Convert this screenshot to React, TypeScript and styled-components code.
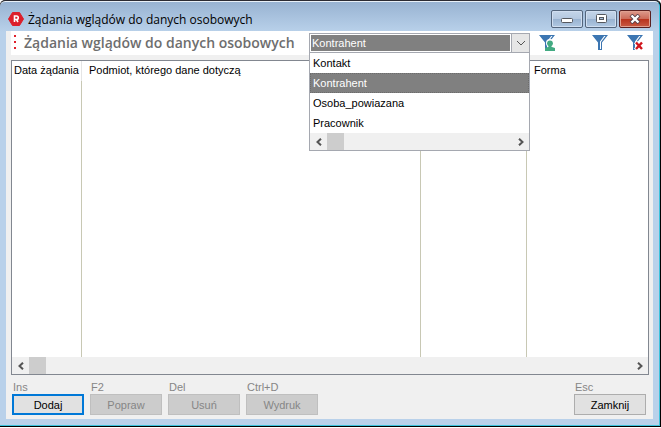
import React, { useState } from "react";
import styled, { createGlobalStyle, css } from "styled-components";

const Global = createGlobalStyle`
  * { box-sizing: border-box; }
  html, body, #root { height: 100%; }
  body { margin: 0; background: #fff; font: 11px/16px "Liberation Sans", Arial, sans-serif; color: #000; }
`;

const Frame = styled.div`
  height: calc(100% - 1px);
  display: flex;
  flex-direction: column;
  border-top: 1px solid #2b2b33;
  border-right: 1px solid #000;
  border-bottom: 1px solid #000;
  border-radius: 5px 5px 0 0;
  background: #000;
  overflow: hidden;
`;

const Glass = styled.div`
  flex: 1;
  min-height: 0;
  display: flex;
  flex-direction: column;
  padding: 0 6px 6px;
  border-radius: 5px 5px 0 0;
  background: linear-gradient(#98b3d2 0, #b9d1ea 30px, #b9d1ea 100%);
  border-top: 1px solid #e8f0f8;
  border-right: 1px solid #3cc3dc;
  border-bottom: 1px solid #3cc3dc;
`;

const TitleBar = styled.header`
  display: flex;
  align-items: center;
  height: 29px;
  padding: 0 2px;
  gap: 4px;
  flex: none;
`;

const WindowTitle = styled.h1`
  flex: 1;
  margin: 0;
  padding-top: 6px;
  font: 12px/18px "Open Sans", "Noto Sans", sans-serif;
  white-space: nowrap;
`;

const Logo = styled.svg`
  width: 16px;
  height: 16px;
  margin-top: 5px;
  flex: none;
`;

const WindowButtons = styled.div`
  display: flex;
  gap: 2px;
  padding-top: 4px;
`;

const WindowButton = styled.button<{ $danger?: boolean }>`
  width: 32px;
  height: 18px;
  padding: 0;
  display: grid;
  place-items: center;
  border: 1px solid ${(p) => (p.$danger ? "#5a2020" : "#53657c")};
  border-radius: 2px;
  box-shadow: inset 0 0 0 1px ${(p) => (p.$danger ? "#e0a090" : "#d0def0")};
  background: ${(p) =>
    p.$danger
      ? "linear-gradient(#dc9a8c 0, #cc6a58 50%, #b8321c 50%, #c85a44 100%)"
      : "linear-gradient(#c4d5e9 0, #b4c8e0 50%, #98b2d0 50%, #b0c8e2 100%)"};
`;

const Client = styled.main`
  flex: 1;
  min-height: 0;
  display: flex;
  flex-direction: column;
  padding: 0 0 4px 5px;
  background: #f0f0f0;
`;

const Toolbar = styled.div`
  display: flex;
  align-items: flex-start;
  height: 24px;
  flex: none;
  background: #fff;
`;

const Grip = styled.svg`
  width: 7px;
  height: 24px;
  flex: none;
`;

const ToolbarTitle = styled.h2`
  flex: none;
  width: 291px;
  margin: 0;
  padding-left: 6px;
  font: 600 14px/24px "Open Sans", "Noto Sans", sans-serif;
  color: #6e6e6e;
  white-space: nowrap;
`;

const Combo = styled.div`
  position: relative;
  width: 221px;
  margin-top: 2px;
  flex: none;
`;

const ComboField = styled.div`
  display: flex;
  height: 20px;
  border: 1px solid #a5a8b0;
  background: #fff;
`;

const ComboSelect = styled.select`
  flex: 1;
  min-width: 0;
  margin: 1px;
  padding: 0 1px;
  appearance: none;
  border: 0;
  border-radius: 0;
  outline: 0;
  background: #808080;
  color: #fff;
  font: 11px/16px "Liberation Sans", Arial, sans-serif;
`;

const ComboArrow = styled.button`
  width: 18px;
  padding: 0;
  display: grid;
  place-items: center;
  border: 0;
  border-left: 1px solid #a5a8b0;
  background: #e6e6e6;
`;

const List = styled.div`
  position: absolute;
  z-index: 2;
  top: 19px;
  left: 0;
  right: 0;
  border: 1px solid #a5a8b0;
  background: #fff;
`;

const Option = styled.div<{ $active: boolean }>`
  height: 20px;
  padding: 0 3px;
  line-height: 20px;
  ${(p) =>
    p.$active &&
    css`
      background: #808080;
      color: #fff;
      outline: 1px dotted #6c6c6c;
      outline-offset: -1px;
    `}
`;

const ScrollTrack = styled.div`
  display: flex;
  height: 17px;
  flex: none;
  background: #f0f0f0;
`;

const ScrollButton = styled.button`
  width: 17px;
  padding: 0;
  display: grid;
  place-items: center;
  border: 0;
  background: transparent;
`;

const ScrollThumb = styled.div`
  width: 17px;
  margin-right: auto;
  background: #cdcdcd;
`;

const Tools = styled.div`
  flex: 1;
  display: flex;
  justify-content: space-between;
  padding: 4px 9px 0 8px;
`;

const ToolGroup = styled.div`
  display: flex;
  gap: 17px;
`;

const Tool = styled.button`
  width: 18px;
  height: 18px;
  padding: 0;
  border: 0;
  background: transparent;
  svg { display: block; }
`;

const Grid = styled.section`
  flex: 1;
  min-height: 0;
  display: flex;
  flex-direction: column;
  margin: 5px 4px 0 0;
  border: 1px solid #828790;
  background: #fff;
`;

const TableArea = styled.div`
  flex: 1;
  min-height: 0;
`;

const Table = styled.table`
  width: 100%;
  height: 100%;
  table-layout: fixed;
  border-collapse: separate;
  border-spacing: 0;
  th {
    height: 20px;
    padding: 0 0 2px 7px;
    font-weight: 400;
    text-align: left;
    white-space: nowrap;
    border-right: 1px solid #e5e5e5;
  }
  th:first-child { padding-left: 2px; }
  td { padding: 0; border-right: 1px solid #c8c8b4; }
  th:last-child, td:last-child { border-right: 0; }
`;

const Col = styled.col<{ $w?: number }>`
  width: ${(p) => (p.$w ? `${p.$w}px` : "auto")};
`;

const Footer = styled.footer`
  display: flex;
  gap: 6px;
  padding: 4px 7px 0 1px;
  flex: none;
`;

const Action = styled.div<{ $end?: boolean }>`
  display: flex;
  flex-direction: column;
  width: 72px;
  margin-left: ${(p) => (p.$end ? "auto" : "0")};
`;

const Shortcut = styled.label`
  height: 15px;
  padding-left: 1px;
  line-height: 16px;
  color: #868686;
`;

const ActionButton = styled.button<{ $primary?: boolean }>`
  height: 21px;
  padding: 0;
  border: ${(p) => (p.$primary ? "2px solid #0078d7" : "1px solid #adadad")};
  background: #e1e1e1;
  color: #000;
  font: 11px/16px "Liberation Sans", Arial, sans-serif;
  &:disabled {
    border-color: #bfbfbf;
    background: #cccccc;
    color: #868686;
  }
`;

const Chevron = ({ dir }: { dir: "left" | "right" }) => (
  <svg width="8" height="8" viewBox="0 0 8 8" fill="none" stroke="#555" strokeWidth="2">
    <path d={dir === "left" ? "M6 .7 2.5 4 6 7.3" : "M2 .7 5.5 4 2 7.3"} />
  </svg>
);

const HorizontalScroll = () => (
  <ScrollTrack>
    <ScrollButton aria-label="W lewo"><Chevron dir="left" /></ScrollButton>
    <ScrollThumb />
    <ScrollButton aria-label="W prawo"><Chevron dir="right" /></ScrollButton>
  </ScrollTrack>
);

const Funnel = ({ badge }: { badge?: "person" | "clear" }) => (
  <svg width="18" height="18" viewBox="0 0 18 18">
    <path d="M1 0h16l-6 7.500V15H7V7.500z" fill="#3c76b2" />
    <path d="M14.500 1 10 7v7H9V6.500L13.200 1z" fill="#fff" />
    {badge === "person" && (
      <g fill="#43aa82">
        <circle cx="12" cy="8" r="4" fill="#fff" />
        <path d="M7 16v-3l3-1h4l3 1v3z" />
        <path d="M10.500 9h3v4h-3z" />
        <circle cx="12" cy="8.300" r="2.900" />
      </g>
    )}
    {badge === "clear" && (
      <>
        <path d="m9.500 7 6.500 8m0-8-6.500 8" stroke="#fff" strokeWidth="4" />
        <path d="m10 7.500 6 6.500m0-6.500-6 6.500" stroke="#d0141c" strokeWidth="2.400" />
      </>
    )}
  </svg>
);

const options = ["Kontakt", "Kontrahent", "Osoba_powiazana", "Pracownik"];
const actions = [
  { key: "Ins", id: "add", label: "Dodaj", primary: true },
  { key: "F2", id: "edit", label: "Popraw", disabled: true },
  { key: "Del", id: "remove", label: "Usuń", disabled: true },
  { key: "Ctrl+D", id: "print", label: "Wydruk", disabled: true },
  { key: "Esc", id: "close", label: "Zamknij", end: true },
];

export default function App() {
  const [value, setValue] = useState("Kontrahent");
  const [open, setOpen] = useState(true);
  return (
    <>
      <Global />
      <Frame>
        <Glass>
          <TitleBar>
            <Logo viewBox="0 0 16 16">
              <path d="M4.500 1.500h7L15.500 8l-4 6.500h-7L.5 8z" fill="#dc1f2b" stroke="#dc1f2b" strokeLinejoin="round" />
              <path d="M6.500 11V5h2a1.500 1.500 0 0 1 0 3.500h-2m2 0 1.500 2.500" fill="none" stroke="#fff" strokeWidth="1.600" />
            </Logo>
            <WindowTitle>Żądania wglądów do danych osobowych</WindowTitle>
            <WindowButtons>
              <WindowButton aria-label="Minimalizuj">
                <svg width="12" height="10" viewBox="0 0 12 10">
                  <rect x=".5" y="4.500" width="11" height="4" rx="1" fill="#fff" stroke="#55585e" />
                </svg>
              </WindowButton>
              <WindowButton aria-label="Maksymalizuj">
                <svg width="11" height="10" viewBox="0 0 11 10">
                  <rect x=".5" y=".5" width="10" height="8" rx="1" fill="#fff" stroke="#55585e" />
                  <rect x="3.500" y="3.500" width="4" height="2" fill="#a8bfda" stroke="#55585e" />
                </svg>
              </WindowButton>
              <WindowButton $danger aria-label="Zamknij okno">
                <svg width="12" height="10" viewBox="0 0 12 10">
                  <path d="m2 1 8 8m0-8-8 8" stroke="#55404a" strokeWidth="4" />
                  <path d="m2.500 1.500 7 7m0-7-7 7" stroke="#fff" strokeWidth="2.400" />
                </svg>
              </WindowButton>
            </WindowButtons>
          </TitleBar>
          <Client>
            <Toolbar>
              <Grip viewBox="0 0 7 24" fill="#e0202a">
                <path d="M3 4h2v2H3zM3 10h2v2H3zM3 16h2v2H3z" />
              </Grip>
              <ToolbarTitle>Żądania wglądów do danych osobowych</ToolbarTitle>
              <Combo>
                <ComboField>
                  <ComboSelect aria-label="Rodzaj podmiotu" value={value} onChange={(e) => setValue(e.target.value)}>
                    {options.map((o) => <option key={o}>{o}</option>)}
                  </ComboSelect>
                  <ComboArrow aria-label="Rozwiń" onClick={() => setOpen(!open)}>
                    <svg width="10" height="6" viewBox="0 0 10 6" fill="none" stroke="#555">
                      <path d="m1 1 4 4 4-4" />
                    </svg>
                  </ComboArrow>
                </ComboField>
                {open && (
                  <List>
                    <div role="listbox" aria-label="Rodzaj podmiotu">
                      {options.map((o) => (
                        <Option key={o} role="option" aria-selected={o === value} $active={o === value} onClick={() => setValue(o)}>
                          {o}
                        </Option>
                      ))}
                    </div>
                    <HorizontalScroll />
                  </List>
                )}
              </Combo>
              <Tools>
                <Tool aria-label="Filtr osób"><Funnel badge="person" /></Tool>
                <ToolGroup>
                  <Tool aria-label="Filtruj"><Funnel /></Tool>
                  <Tool aria-label="Usuń filtr"><Funnel badge="clear" /></Tool>
                </ToolGroup>
              </Tools>
            </Toolbar>
            <Grid>
              <TableArea>
                <Table>
                  <colgroup>
                    <Col $w={70} />
                    <Col $w={339} />
                    <Col $w={106} />
                    <Col />
                  </colgroup>
                  <thead>
                    <tr>
                      <th>Data żądania</th>
                      <th>Podmiot, którego dane dotyczą</th>
                      <th />
                      <th>Forma</th>
                    </tr>
                  </thead>
                  <tbody>
                    <tr><td /><td /><td /><td /></tr>
                  </tbody>
                </Table>
              </TableArea>
              <HorizontalScroll />
            </Grid>
            <Footer>
              {actions.map((a) => (
                <Action key={a.id} $end={a.end}>
                  <Shortcut htmlFor={a.id}>{a.key}</Shortcut>
                  <ActionButton id={a.id} $primary={a.primary} disabled={a.disabled}>{a.label}</ActionButton>
                </Action>
              ))}
            </Footer>
          </Client>
        </Glass>
      </Frame>
    </>
  );
}
